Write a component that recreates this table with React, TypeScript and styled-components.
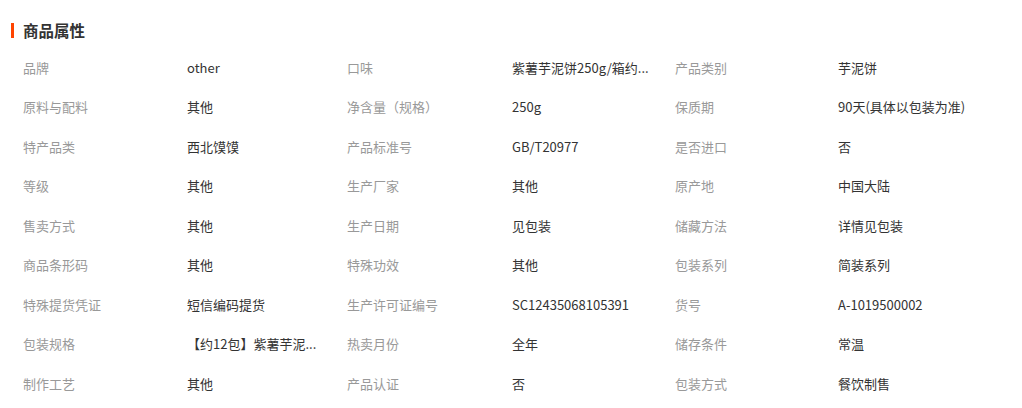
import React from "react";
import styled, { createGlobalStyle } from "styled-components";

const Global = createGlobalStyle`
  html, body { margin: 0; padding: 0; background: #fff; }
  body { font-family: "Noto Sans CJK SC", "Noto Sans", sans-serif; }
`;

const Wrap = styled.div`
  width: 1022px;
  height: 408px;
  box-sizing: border-box;
  padding-top: 21px;
  overflow: hidden;
`;

const Title = styled.h3`
  margin: 0 0 9px 11px;
  display: flex;
  align-items: center;
  gap: 9px;
  font-size: 15.5px;
  line-height: 18px;
  font-weight: 700;
  color: #333;
  &::before {
    content: "";
    display: block;
    width: 3px;
    height: 15px;
    background: #ff4400;
  }
`;

const Grid = styled.div`
  display: grid;
  grid-template-columns: 164px 160px 165px 163px 163px 1fr;
  padding-left: 23px;
  grid-auto-rows: 39.5px;
  align-items: center;
  font-size: 13px;
  line-height: 18px;
`;

const Label = styled.div`
  color: #999;
  white-space: nowrap;
`;

const Value = styled.div`
  color: #333;
  white-space: nowrap;
`;

const rows: [string, string][][] = [
  [["品牌", "other"], ["口味", "紫薯芋泥饼250g/箱约..."], ["产品类别", "芋泥饼"]],
  [["原料与配料", "其他"], ["净含量（规格）", "250g"], ["保质期", "90天(具体以包装为准)"]],
  [["特产品类", "西北馍馍"], ["产品标准号", "GB/T20977"], ["是否进口", "否"]],
  [["等级", "其他"], ["生产厂家", "其他"], ["原产地", "中国大陆"]],
  [["售卖方式", "其他"], ["生产日期", "见包装"], ["储藏方法", "详情见包装"]],
  [["商品条形码", "其他"], ["特殊功效", "其他"], ["包装系列", "简装系列"]],
  [["特殊提货凭证", "短信编码提货"], ["生产许可证编号", "SC12435068105391"], ["货号", "A-1019500002"]],
  [["包装规格", "【约12包】紫薯芋泥..."], ["热卖月份", "全年"], ["储存条件", "常温"]],
  [["制作工艺", "其他"], ["产品认证", "否"], ["包装方式", "餐饮制售"]],
];

export default function App() {
  return (
    <Wrap>
      <Global />
      <Title>商品属性</Title>
      <Grid>
        {rows.flatMap((r, i) =>
          r.flatMap(([l, v], j) => [
            <Label key={`l${i}-${j}`}>{l}</Label>,
            <Value key={`v${i}-${j}`}>{v}</Value>,
          ])
        )}
      </Grid>
    </Wrap>
  );
}
